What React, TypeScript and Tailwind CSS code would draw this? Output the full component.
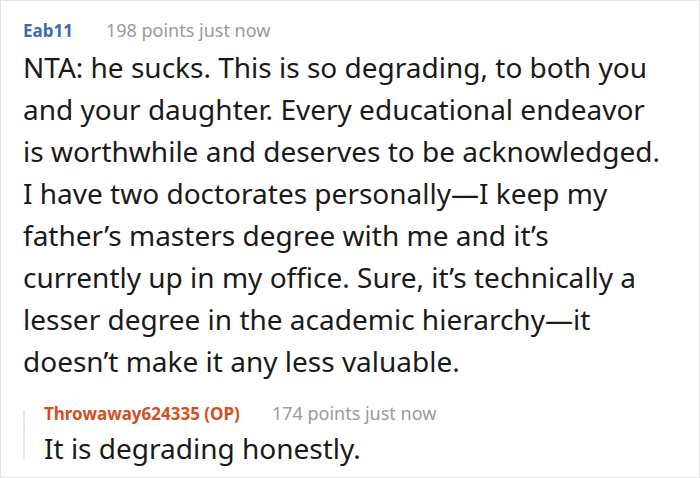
import React from "react";

export default function App() {
  return (
    <div
      className="w-[700px] h-[478px] bg-white border border-[#e4e4e4] overflow-hidden"
      style={{ fontFamily: '"Noto Sans", "Open Sans", sans-serif' }}
    >
      <div className="pl-[22px] pt-[16px]">
        <div className="flex items-baseline h-[26px] leading-[26px]">
          <span className="text-[17px] font-bold text-[#3a6cb4]">Eab11</span>
          <span className="ml-[33px] text-[18px] text-[#9a9a9a]">198 points just now</span>
        </div>
        <p className="mt-[3px] text-[28px] leading-[42px] text-[#1a1a1a] whitespace-nowrap">
          NTA: he sucks. This is so degrading, to both you
          <br />
          and your daughter. Every educational endeavor
          <br />
          is worthwhile and deserves to be acknowledged.
          <br />
          I have two doctorates personally—I keep my
          <br />
          father’s masters degree with me and it’s
          <br />
          currently up in my office. Sure, it’s technically a
          <br />
          lesser degree in the academic hierarchy—it
          <br />
          doesn’t make it any less valuable.
        </p>
        <div className="relative mt-[19px] pl-[21px] before:content-[''] before:absolute before:left-0 before:top-[9px] before:h-[49px] before:w-[2px] before:bg-[#e6e6e6]">
          <div className="flex items-baseline h-[24px] leading-[24px]">
            <span className="text-[17px] font-bold text-[#d2501e]">Throwaway624335 (OP)</span>
            <span className="ml-[32px] text-[18px] text-[#9a9a9a]">174 points just now</span>
          </div>
          <p className="mt-[2px] text-[28px] leading-[42px] text-[#1a1a1a]">It is degrading honestly.</p>
        </div>
      </div>
    </div>
  );
}
